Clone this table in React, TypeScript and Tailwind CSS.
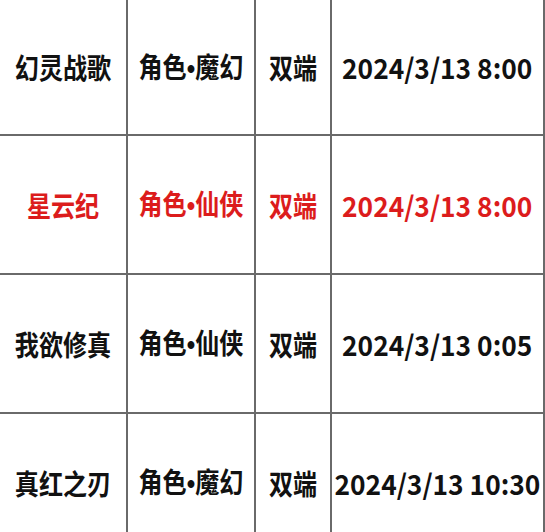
const rows = [
  { name: '幻灵战歌', tag: ['角色', '魔幻'], side: '双端', time: '2024/3/13 8:00', hot: false },
  { name: '星云纪', tag: ['角色', '仙侠'], side: '双端', time: '2024/3/13 8:00', hot: true },
  { name: '我欲修真', tag: ['角色', '仙侠'], side: '双端', time: '2024/3/13 0:05', hot: false },
  { name: '真红之刃', tag: ['角色', '魔幻'], side: '双端', time: '2024/3/13 10:30', hot: false },
];

const Cell = ({ children, hot, first, wide }: { children: React.ReactNode; hot: boolean; first: boolean; wide?: boolean }) => (
  <div
    className={`flex items-center justify-center border-r-2 border-b-2 border-[#6a6a6a] ${first ? 'h-[136px]' : 'h-[139px]'} ${
      hot ? 'text-[#dc1c1c]' : 'text-[#111]'
    }`}
  >
    <span className={`inline-block whitespace-nowrap ${wide ? 'scale-x-[0.94]' : 'scale-x-[0.86]'}`}>{children}</span>
  </div>
);

export default function App() {
  return (
    <div className="w-[545px] h-[532px] overflow-hidden bg-white font-['Noto_Sans_CJK_SC',sans-serif] text-[28px] font-bold leading-none">
      <div className="grid grid-cols-[128px_128px_76px_213px]">
        {rows.map((r, i) => (
          <div key={i} className="contents">
            <Cell hot={r.hot} first={i === 0}>{r.name}</Cell>
            <Cell hot={r.hot} first={i === 0}>
              {r.tag[0]}
              <span className="font-['Liberation_Sans',sans-serif]">•</span>
              {r.tag[1]}
            </Cell>
            <Cell hot={r.hot} first={i === 0}>{r.side}</Cell>
            <Cell hot={r.hot} first={i === 0} wide>{r.time}</Cell>
          </div>
        ))}
      </div>
    </div>
  );
}
